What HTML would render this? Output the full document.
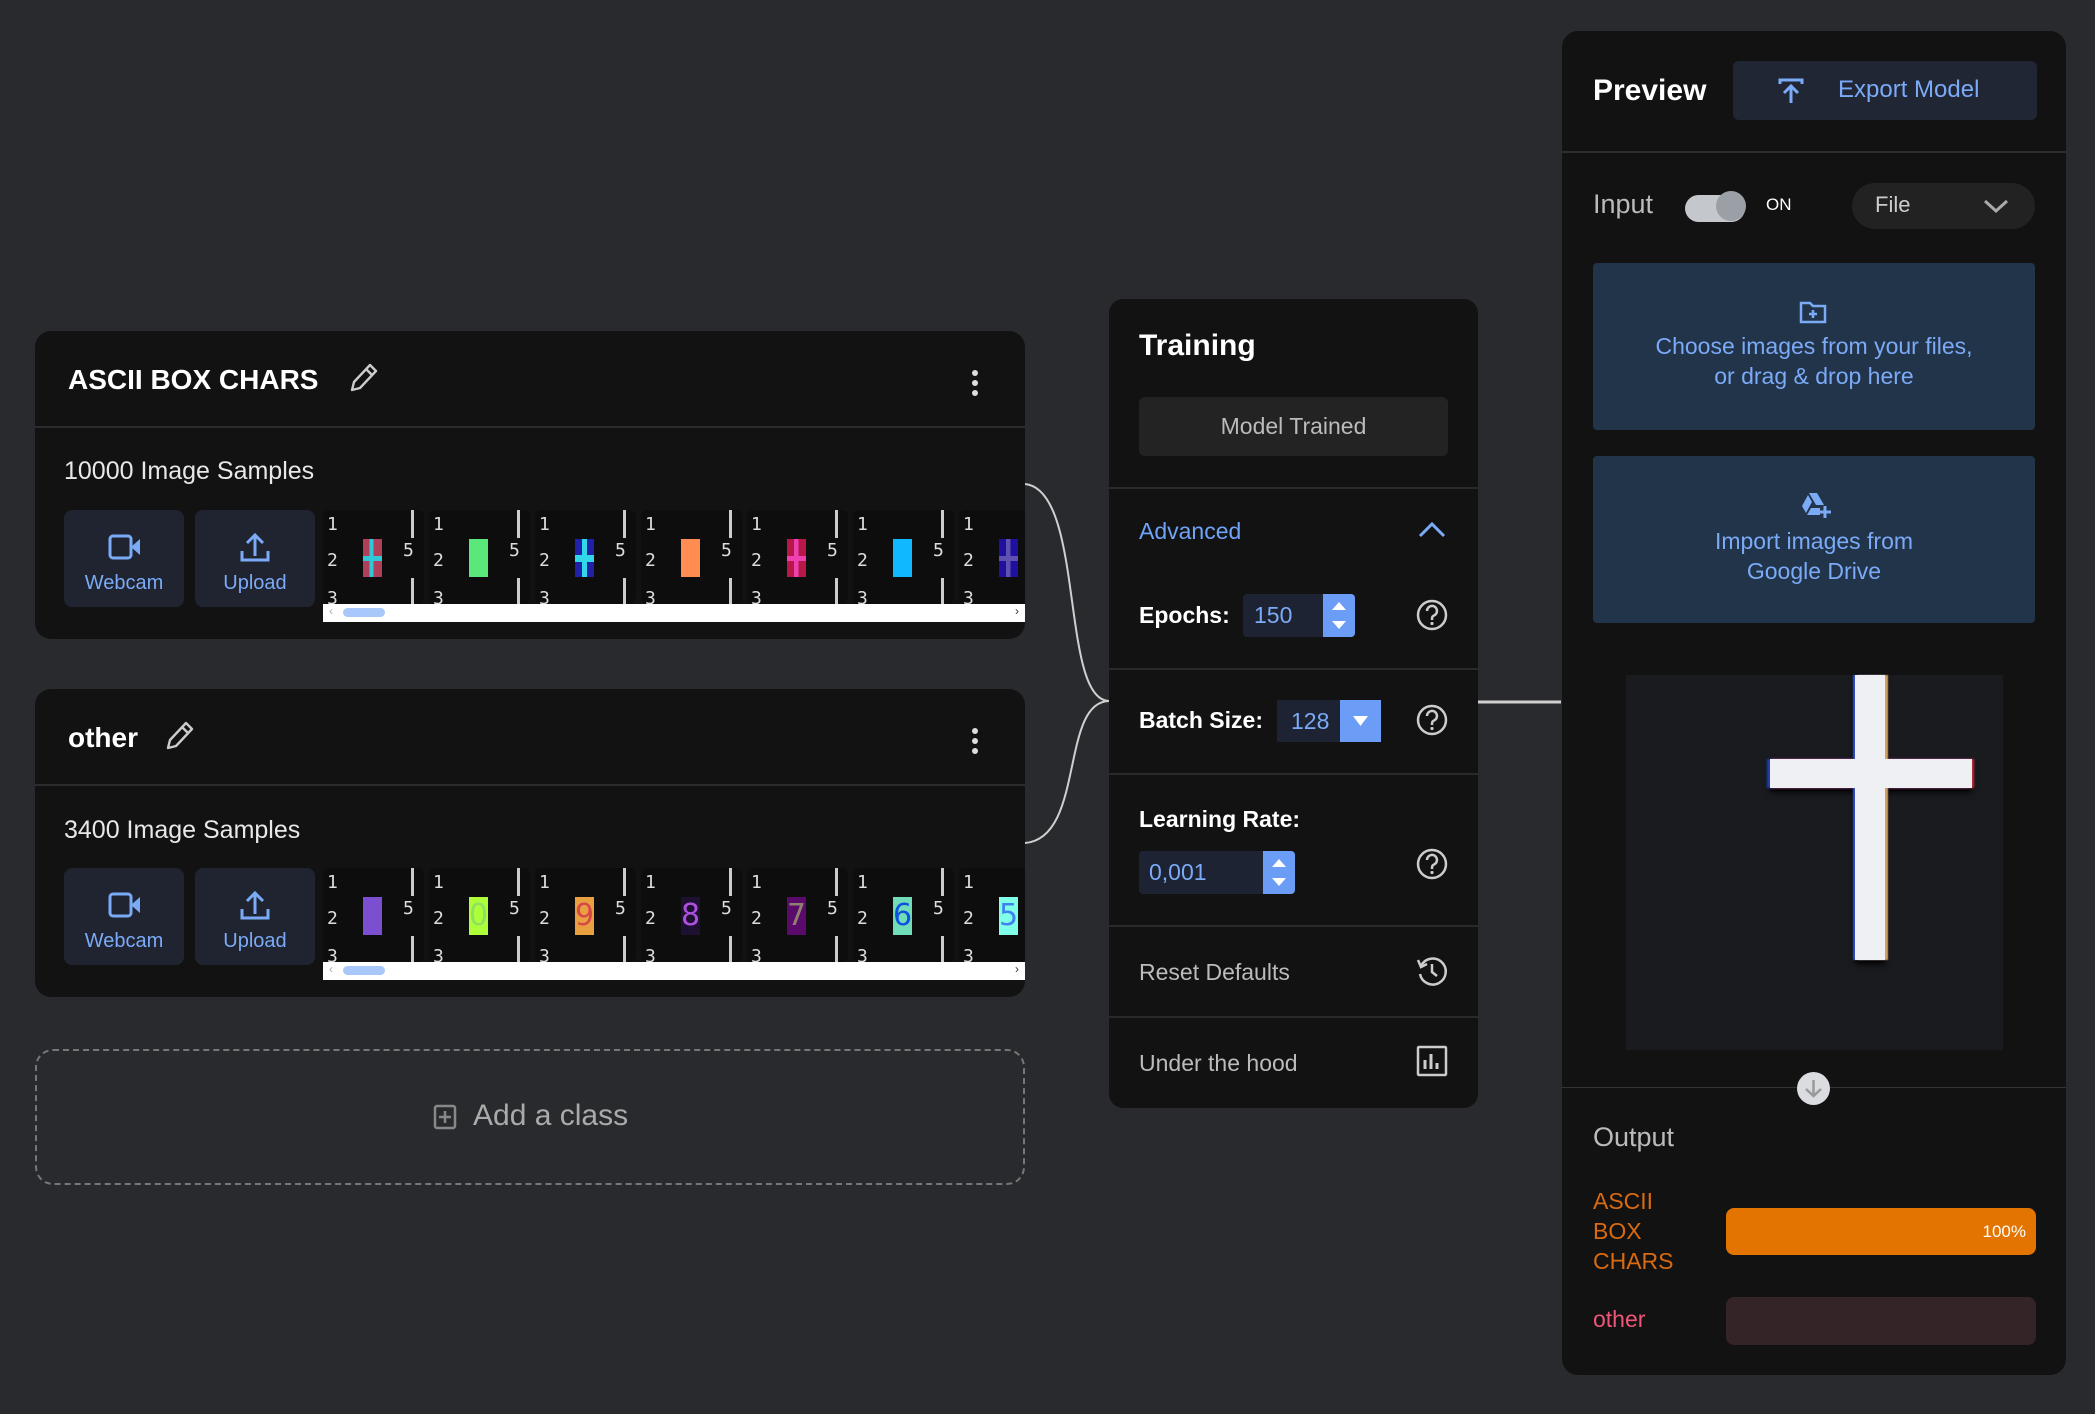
<!DOCTYPE html>
<html><head><meta charset="utf-8">
<style>
*{box-sizing:border-box;margin:0;padding:0}
body{width:2095px;height:1414px;background:#292a2d;font-family:"Liberation Sans",sans-serif;position:relative;overflow:hidden;color:#fff}
.abs{position:absolute}
.card{position:absolute;background:#121212;border-radius:16px}
.hdiv{position:absolute;left:0;right:0;height:2px;background:#2c2c2e}
.title{position:absolute;font-size:29px;color:#fff}
.samples{position:absolute;font-size:25px;color:#e8e8e8}
.btn{position:absolute;width:120px;height:97px;background:#1f2430;border-radius:8px;color:#7baaf7;font-size:20px;text-align:center}
.btn svg{position:absolute;left:43px;top:22px}
.btn span{position:absolute;left:0;right:0;top:62px}
.strip{position:absolute;left:323px;width:702px;height:112px;overflow:hidden}
.th{position:absolute;top:0;width:101px;height:94px;background:#0d0d0d;border-radius:6px;overflow:hidden;font-family:"DejaVu Sans Mono",monospace;font-size:18px;color:#ddd}
.th span{position:absolute}
.n1{left:4px;top:4px}.n2{left:4px;top:40px}.n3{left:4px;top:78px}.n5{left:80px;top:30px}
.th i{position:absolute;left:88px;width:3px;background:#ccc}
.l1{top:0;height:28px}.l2{top:68px;height:26px}
.th b{position:absolute;left:40px;top:29px;width:19px;height:38px;font-weight:normal;font-size:30px;line-height:38px;text-align:center;font-family:"DejaVu Sans",sans-serif}
.sb{position:absolute;left:0;top:94px;width:702px;height:18px;background:#fff}
.sb .k{position:absolute;left:20px;top:4px;width:42px;height:9px;border-radius:5px;background:#a8c7fa}
.sb .la{position:absolute;left:6px;top:0;font-size:12px;color:#aaa}
.sb .ra{position:absolute;right:6px;top:0;font-size:12px;color:#333}
.tp{position:absolute;left:1109px;top:299px;width:369px;height:809px;background:#121212;border-radius:14px}
.tp .row{position:absolute;left:30px;font-size:23px}
.sep{position:absolute;left:0;right:0;height:2px;background:#2a2a2c}
.rp{position:absolute;left:1562px;top:31px;width:504px;height:1344px;background:#121212;border-radius:16px}
.spin{position:absolute;background:#1d2333;border-radius:4px;color:#7baaf7;font-size:23px}
.spin .a{position:absolute;top:0;right:0;bottom:0;background:#6b9cf6;border-radius:0 4px 4px 0}
</style></head><body>

<svg class="abs" style="left:0;top:0" width="2095" height="1414">
<path d="M1025 484 C1085 490 1060 700 1109 701" fill="none" stroke="#cfcfcf" stroke-width="2"/>
<path d="M1025 843 C1085 838 1060 702 1109 701" fill="none" stroke="#cfcfcf" stroke-width="2"/>
<path d="M1478 702 L1561 702" stroke="#cfcfcf" stroke-width="3"/>
</svg>

<div class="card" style="left:35px;top:331px;width:990px;height:308px">
  <div class="title" style="left:33px;top:33px;font-weight:bold;font-size:28px">ASCII BOX CHARS</div>
  <svg class="abs" style="left:312px;top:30px" width="32" height="34" viewBox="0 0 32 34"><path d="M5 29 L7 21 L23 4 L29 10 L13 27 Z M19 8 L25 14" fill="none" stroke="#ccc" stroke-width="2.4" stroke-linejoin="round"/></svg>
  <svg class="abs" style="left:935px;top:38px" width="10" height="30"><circle cx="5" cy="4" r="3" fill="#ddd"/><circle cx="5" cy="14" r="3" fill="#ddd"/><circle cx="5" cy="24" r="3" fill="#ddd"/></svg>
  <div class="hdiv" style="top:95px"></div>
  <div class="samples" style="left:29px;top:126px">10000 Image Samples</div>
</div>
<div class="btn" style="left:64px;top:510px"><svg width="36" height="30" viewBox="0 0 36 30"><rect x="3" y="4" width="21" height="22" rx="3" fill="none" stroke="#7baaf7" stroke-width="3"/><path d="M24 15 L33 7 L33 23 Z" fill="#7baaf7"/></svg><span>Webcam</span></div>
<div class="btn" style="left:195px;top:510px"><svg width="34" height="32" viewBox="0 0 34 32"><path d="M17 24 V4 M9 11 L17 3 L25 11 M4 19 V28 H30 V19" fill="none" stroke="#7baaf7" stroke-width="3"/></svg><span>Upload</span></div>
<div class="strip" style="top:510px">
  <div class="th" style="left:0"><span class="n1">1</span><span class="n2">2</span><span class="n3">3</span><span class="n5">5</span><i class="l1"></i><i class="l2"></i><b style="background:linear-gradient(to right,transparent 35%,#30c8d8 35%,#30c8d8 55%,transparent 55%),linear-gradient(to bottom,transparent 45%,#30c8d8 45%,#30c8d8 58%,transparent 58%),#b0405a"></b></div>
  <div class="th" style="left:106px"><span class="n1">1</span><span class="n2">2</span><span class="n3">3</span><span class="n5">5</span><i class="l1"></i><i class="l2"></i><b style="background:#5be87a"></b></div>
  <div class="th" style="left:212px"><span class="n1">1</span><span class="n2">2</span><span class="n3">3</span><span class="n5">5</span><i class="l1"></i><i class="l2"></i><b style="background:linear-gradient(to right,transparent 38%,#30d8e8 38%,#30d8e8 62%,transparent 62%),linear-gradient(to bottom,transparent 42%,#30d8e8 42%,#30d8e8 60%,transparent 60%),#2020a8"></b></div>
  <div class="th" style="left:318px"><span class="n1">1</span><span class="n2">2</span><span class="n3">3</span><span class="n5">5</span><i class="l1"></i><i class="l2"></i><b style="background:#ff8c50"></b></div>
  <div class="th" style="left:424px"><span class="n1">1</span><span class="n2">2</span><span class="n3">3</span><span class="n5">5</span><i class="l1"></i><i class="l2"></i><b style="background:linear-gradient(to right,transparent 38%,#f040b0 38%,#f040b0 60%,transparent 60%),linear-gradient(to bottom,transparent 45%,#f040b0 45%,#f040b0 58%,transparent 58%),#b81848"></b></div>
  <div class="th" style="left:530px"><span class="n1">1</span><span class="n2">2</span><span class="n3">3</span><span class="n5">5</span><i class="l1"></i><i class="l2"></i><b style="background:#10b8ff"></b></div>
  <div class="th" style="left:636px"><span class="n1">1</span><span class="n2">2</span><span class="n3">3</span><span class="n5">5</span><i class="l1"></i><i class="l2"></i><b style="background:linear-gradient(to right,transparent 38%,#6050b0 38%,#6050b0 60%,transparent 60%),linear-gradient(to bottom,transparent 45%,#6050b0 45%,#6050b0 58%,transparent 58%),#2010a0"></b></div>
  <div class="sb"><span class="la">‹</span><div class="k"></div><span class="ra">›</span></div>
</div>

<div class="card" style="left:35px;top:689px;width:990px;height:308px">
  <div class="title" style="left:33px;top:33px;font-weight:bold;font-size:28px">other</div>
  <svg class="abs" style="left:128px;top:30px" width="32" height="34" viewBox="0 0 32 34"><path d="M5 29 L7 21 L23 4 L29 10 L13 27 Z M19 8 L25 14" fill="none" stroke="#ccc" stroke-width="2.4" stroke-linejoin="round"/></svg>
  <svg class="abs" style="left:935px;top:38px" width="10" height="30"><circle cx="5" cy="4" r="3" fill="#ddd"/><circle cx="5" cy="14" r="3" fill="#ddd"/><circle cx="5" cy="24" r="3" fill="#ddd"/></svg>
  <div class="hdiv" style="top:95px"></div>
  <div class="samples" style="left:29px;top:127px">3400 Image Samples</div>
</div>
<div class="btn" style="left:64px;top:868px"><svg width="36" height="30" viewBox="0 0 36 30"><rect x="3" y="4" width="21" height="22" rx="3" fill="none" stroke="#7baaf7" stroke-width="3"/><path d="M24 15 L33 7 L33 23 Z" fill="#7baaf7"/></svg><span>Webcam</span></div>
<div class="btn" style="left:195px;top:868px"><svg width="34" height="32" viewBox="0 0 34 32"><path d="M17 24 V4 M9 11 L17 3 L25 11 M4 19 V28 H30 V19" fill="none" stroke="#7baaf7" stroke-width="3"/></svg><span>Upload</span></div>
<div class="strip" style="top:868px">
  <div class="th" style="left:0"><span class="n1">1</span><span class="n2">2</span><span class="n3">3</span><span class="n5">5</span><i class="l1"></i><i class="l2"></i><b style="background:#7b4fd0"></b></div>
  <div class="th" style="left:106px"><span class="n1">1</span><span class="n2">2</span><span class="n3">3</span><span class="n5">5</span><i class="l1"></i><i class="l2"></i><b style="background:#adff3a;color:#8ee060">0</b></div>
  <div class="th" style="left:212px"><span class="n1">1</span><span class="n2">2</span><span class="n3">3</span><span class="n5">5</span><i class="l1"></i><i class="l2"></i><b style="background:#e8a040;color:#d84848">9</b></div>
  <div class="th" style="left:318px"><span class="n1">1</span><span class="n2">2</span><span class="n3">3</span><span class="n5">5</span><i class="l1"></i><i class="l2"></i><b style="background:#1e1030;color:#b050e0">8</b></div>
  <div class="th" style="left:424px"><span class="n1">1</span><span class="n2">2</span><span class="n3">3</span><span class="n5">5</span><i class="l1"></i><i class="l2"></i><b style="background:#5a0a6a;color:#908070">7</b></div>
  <div class="th" style="left:530px"><span class="n1">1</span><span class="n2">2</span><span class="n3">3</span><span class="n5">5</span><i class="l1"></i><i class="l2"></i><b style="background:#70dcb8;color:#1050e0">6</b></div>
  <div class="th" style="left:636px"><span class="n1">1</span><span class="n2">2</span><span class="n3">3</span><span class="n5">5</span><i class="l1"></i><i class="l2"></i><b style="background:#80ffe8;color:#4080f0">5</b></div>
  <div class="sb"><span class="la">‹</span><div class="k"></div><span class="ra">›</span></div>
</div>

<div class="abs" style="left:35px;top:1049px;width:990px;height:136px;border:2px dashed #777;border-radius:18px"></div>
<svg class="abs" style="left:433px;top:1104px" width="24" height="26" viewBox="0 0 24 26"><rect x="2" y="2" width="20" height="22" rx="2" fill="none" stroke="#888" stroke-width="2.5"/><path d="M12 7 V19 M6 13 H18" stroke="#888" stroke-width="2.5"/></svg>
<div class="abs" style="left:473px;top:1099px;font-size:30px;color:#aaa">Add a class</div>

<div class="tp">
  <div class="row" style="top:30px;font-size:30px;color:#fff;font-weight:bold">Training</div>
  <div class="abs" style="left:30px;top:98px;width:309px;height:59px;background:#232323;border-radius:6px;color:#bbb;font-size:23px;text-align:center;line-height:59px">Model Trained</div>
  <div class="sep" style="top:188px"></div>
  <div class="row" style="top:219px;color:#6fa3f7">Advanced</div>
  <svg class="abs" style="left:308px;top:221px" width="30" height="20"><path d="M3 16 L15 4 L27 16" fill="none" stroke="#7baaf7" stroke-width="3"/></svg>
  <div class="row" style="top:303px;font-weight:bold;color:#fff">Epochs:</div>
  <div class="spin" style="left:134px;top:295px;width:112px;height:43px"><span style="position:absolute;left:11px;top:8px">150</span><div class="a" style="width:32px"><svg width="32" height="43"><path d="M9 16 L16 8 L23 16 Z M9 27 L16 35 L23 27 Z" fill="#fff"/></svg></div></div>
  <svg class="abs" style="left:306px;top:299px" width="34" height="34" viewBox="0 0 34 34"><circle cx="17" cy="17" r="14" fill="none" stroke="#ccc" stroke-width="2.5"/><path d="M12 13 a5 5 0 1 1 7 4.5 c-2 1 -2 2 -2 4.5" fill="none" stroke="#ccc" stroke-width="2.5"/><circle cx="17" cy="25.5" r="1.6" fill="#ccc"/></svg>
  <div class="sep" style="top:369px"></div>
  <div class="row" style="top:408px;font-weight:bold;color:#fff">Batch Size:</div>
  <div class="spin" style="left:168px;top:401px;width:104px;height:42px;border-radius:2px"><span style="position:absolute;left:14px;top:8px">128</span><div class="a" style="width:41px;border-radius:0"><svg width="41" height="42"><path d="M13 16 L28 16 L20.5 26 Z" fill="#fff"/></svg></div></div>
  <svg class="abs" style="left:306px;top:404px" width="34" height="34" viewBox="0 0 34 34"><circle cx="17" cy="17" r="14" fill="none" stroke="#ccc" stroke-width="2.5"/><path d="M12 13 a5 5 0 1 1 7 4.5 c-2 1 -2 2 -2 4.5" fill="none" stroke="#ccc" stroke-width="2.5"/><circle cx="17" cy="25.5" r="1.6" fill="#ccc"/></svg>
  <div class="sep" style="top:474px"></div>
  <div class="row" style="top:507px;font-weight:bold;color:#fff">Learning Rate:</div>
  <div class="spin" style="left:30px;top:552px;width:156px;height:43px"><span style="position:absolute;left:10px;top:8px">0,001</span><div class="a" style="width:32px"><svg width="32" height="43"><path d="M9 16 L16 8 L23 16 Z M9 27 L16 35 L23 27 Z" fill="#fff"/></svg></div></div>
  <svg class="abs" style="left:306px;top:548px" width="34" height="34" viewBox="0 0 34 34"><circle cx="17" cy="17" r="14" fill="none" stroke="#ccc" stroke-width="2.5"/><path d="M12 13 a5 5 0 1 1 7 4.5 c-2 1 -2 2 -2 4.5" fill="none" stroke="#ccc" stroke-width="2.5"/><circle cx="17" cy="25.5" r="1.6" fill="#ccc"/></svg>
  <div class="sep" style="top:626px"></div>
  <div class="row" style="top:660px;color:#bbb">Reset Defaults</div>
  <svg class="abs" style="left:306px;top:655px" width="34" height="34" viewBox="0 0 34 34"><path d="M6 12 A13 13 0 1 1 5 20" fill="none" stroke="#ccc" stroke-width="2.5"/><path d="M3 6 L6 13 L12 10" fill="none" stroke="#ccc" stroke-width="2.5"/><path d="M17 10 V18 L22 22" fill="none" stroke="#ccc" stroke-width="2.5"/></svg>
  <div class="sep" style="top:717px"></div>
  <div class="row" style="top:751px;color:#bbb">Under the hood</div>
  <svg class="abs" style="left:307px;top:746px" width="32" height="32" viewBox="0 0 32 32"><rect x="2" y="2" width="28" height="28" rx="1" fill="none" stroke="#ccc" stroke-width="2.5"/><path d="M9 24 V15 M15 24 V9 M21 24 V18" stroke="#ccc" stroke-width="3"/></svg>
</div>

<div class="rp">
  <div class="abs" style="left:31px;top:43px;font-size:30px;font-weight:bold;color:#fff">Preview</div>
  <div class="abs" style="left:171px;top:30px;width:304px;height:59px;background:#202634;border-radius:6px"></div>
  <svg class="abs" style="left:216px;top:47px" width="26" height="26" viewBox="0 0 26 26"><path d="M2 6 V2 H24 V6" fill="none" stroke="#7baaf7" stroke-width="3"/><path d="M13 25 V9 M6 15 L13 8 L20 15" fill="none" stroke="#7baaf7" stroke-width="3"/></svg>
  <div class="abs" style="left:276px;top:45px;font-size:24px;color:#7baaf7">Export Model</div>
  <div class="sep" style="top:120px;background:#2e2e30"></div>
  <div class="abs" style="left:31px;top:158px;font-size:27px;color:#bbb">Input</div>
  <div class="abs" style="left:123px;top:164px;width:60px;height:27px;border-radius:14px;background:#c4c7cc"></div>
  <div class="abs" style="left:154px;top:160px;width:30px;height:30px;border-radius:50%;background:#9aa0a6"></div>
  <div class="abs" style="left:204px;top:164px;font-size:17px;color:#fff">ON</div>
  <div class="abs" style="left:290px;top:152px;width:183px;height:46px;border-radius:23px;background:#222;"></div>
  <div class="abs" style="left:313px;top:161px;font-size:22px;color:#ccc">File</div>
  <svg class="abs" style="left:420px;top:166px" width="28" height="18"><path d="M3 4 L14 14 L25 4" fill="none" stroke="#aaa" stroke-width="3"/></svg>
  <div class="abs" style="left:31px;top:232px;width:442px;height:167px;background:#22344a;border-radius:4px"></div>
  <svg class="abs" style="left:237px;top:269px" width="28" height="24" viewBox="0 0 28 24"><path d="M2 3 H11 L14 6 H26 V22 H2 Z" fill="none" stroke="#7baaf7" stroke-width="2.5"/><path d="M14 10 V18 M10 14 H18" stroke="#7baaf7" stroke-width="2.5"/></svg>
  <div class="abs" style="left:31px;top:300px;width:442px;text-align:center;font-size:23px;line-height:30px;color:#7baaf7">Choose images from your files,<br>or drag &amp; drop here</div>
  <div class="abs" style="left:31px;top:425px;width:442px;height:167px;background:#22344a;border-radius:4px"></div>
  <svg class="abs" style="left:238px;top:460px" width="32" height="28" viewBox="0 0 32 28"><path d="M9 2 H17 L24 14 H16 Z" fill="#7baaf7"/><path d="M8 4 L2 15 L6 22 L12 11 Z" fill="#7baaf7"/><path d="M7 24 L11 17 H20 V24 Z" fill="#7baaf7"/><path d="M25 15 V27 M19 21 H31" stroke="#7baaf7" stroke-width="3"/></svg>
  <div class="abs" style="left:31px;top:495px;width:442px;text-align:center;font-size:23px;line-height:30px;color:#7baaf7">Import images from<br>Google Drive</div>
  <div class="abs" style="left:64px;top:644px;width:377px;height:375px;background:#1a1b1f"></div>
  <div class="abs" style="left:208px;top:728px;width:202px;height:29px;background:#eef0f4;box-shadow:2px 0 2px #c03040,-3px 0 2px #2040b0,0 4px 6px #000"></div>
  <div class="abs" style="left:293px;top:644px;width:30px;height:285px;background:#eef0f4;box-shadow:3px 0 1px #d0a060,-2px 0 1px #3050c0,0 4px 6px #000"></div>
  <div class="abs" style="left:285px;top:728px;width:46px;height:29px;background:#eef0f4"></div>
  <div class="sep" style="top:1056px;height:1px;background:#333"></div>
  <div class="abs" style="left:235px;top:1041px;width:33px;height:33px;border-radius:50%;background:#dadce0"></div>
  <svg class="abs" style="left:240px;top:1046px" width="23" height="23"><path d="M11.5 3 V19 M4 12 L11.5 19 L19 12" fill="none" stroke="#999" stroke-width="2.5"/></svg>
  <div class="abs" style="left:31px;top:1091px;font-size:27px;color:#bbb">Output</div>
  <div class="abs" style="left:31px;top:1155px;font-size:23px;line-height:30px;color:#d96a10">ASCII<br>BOX<br>CHARS</div>
  <div class="abs" style="left:164px;top:1177px;width:310px;height:47px;border-radius:8px;background:#e37400"></div>
  <div class="abs" style="left:164px;top:1191px;width:300px;text-align:right;font-size:17px;color:#fff">100%</div>
  <div class="abs" style="left:31px;top:1275px;font-size:23px;color:#ee5577">other</div>
  <div class="abs" style="left:164px;top:1266px;width:310px;height:48px;border-radius:8px;background:#342327"></div>
</div>
</body></html>
